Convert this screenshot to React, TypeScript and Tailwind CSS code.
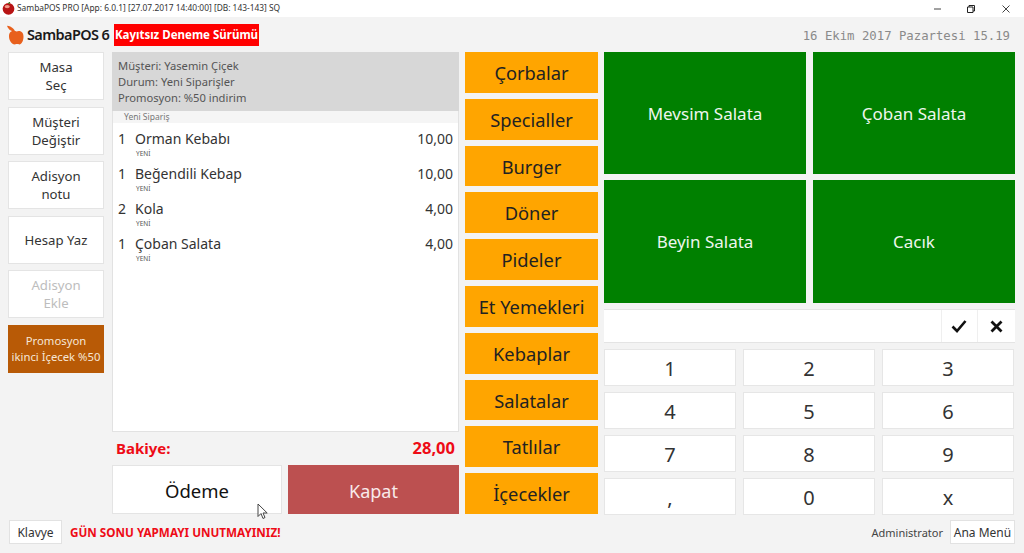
import React from "react";

const Apple = () => (
  <svg width="17" height="20" viewBox="0 0 17 20" className="shrink-0">
    <path d="M9.500 6.500C7 5.200 2 5.500 2 11.500 2 15.500 5 19.500 7.500 19.500c1 0 1.300-.4 2.500-.4s1.400.4 2.400.4c2.200 0 4.100-4 4.100-7.800 0-5.700-4.500-6.500-7-5.200z" fill="#e8601c" />
    <path d="M8 6.500C7 4 5 1.500 0 .8 1.200 4.200 3.500 6.500 8 6.500z" fill="#e8601c" />
  </svg>
);

const Side = ({ a, b, cls = "text-[#333]" }: { a: string; b?: string; cls?: string }) => (
  <div className={`flex h-[48px] flex-col items-center justify-center border border-[#e4e4e4] bg-white text-[13.200px] leading-[18px] ${cls}`}>
    <span>{a}</span>
    {b && <span>{b}</span>}
  </div>
);

const orders = [
  ["1", "Orman Kebabı", "10,00"],
  ["1", "Beğendili Kebap", "10,00"],
  ["2", "Kola", "4,00"],
  ["1", "Çoban Salata", "4,00"],
];
const cats = ["Çorbalar", "Specialler", "Burger", "Döner", "Pideler", "Et Yemekleri", "Kebaplar", "Salatalar", "Tatlılar", "İçecekler"];
const keys = ["1", "2", "3", "4", "5", "6", "7", "8", "9", ",", "0", "x"];

export default function App() {
  return (
    <div className="flex h-[553px] w-[1024px] flex-col overflow-hidden bg-[#f3f3f3] font-['Noto_Sans',sans-serif]">
      <div className="flex h-[17px] items-center bg-white pl-[2px] text-[8.400px] text-[#333]">
        <svg width="13" height="13" viewBox="0 0 20 20" className="mr-[2px]">
          <circle cx="10" cy="10.500" r="9" fill="#b81414" />
          <ellipse cx="8" cy="7" rx="4" ry="2.500" fill="#f29a8a" />
          <path d="M10 3l2-3" stroke="#3d7a1f" strokeWidth="2" />
        </svg>
        <span>SambaPOS PRO [App: 6.0.1] [27.07.2017 14:40:00] [DB: 143-143] SQ</span>
        <div className="ml-auto flex items-center">
          <svg width="8" height="8" viewBox="0 0 8 8" className="mr-[25px]"><path d="M0 4h7" stroke="#444" strokeWidth="1" /></svg>
          <svg width="8" height="8" viewBox="0 0 8 8" className="mr-[27px]"><path d="M.5 2h5.500v5.500H.5zM2 2V.5h5.500V6H6" fill="none" stroke="#222" strokeWidth="1" /></svg>
          <svg width="8" height="8" viewBox="0 0 8 8" className="mr-[14px]"><path d="M.5.5l7 7M7.500.5l-7 7" stroke="#444" strokeWidth="1" /></svg>
        </div>
      </div>

      <div className="flex h-[35px] items-center pl-[7px] pr-[14px] pt-[1px]">
        <Apple />
        <span className="ml-[3px] w-[86px] whitespace-nowrap text-[14.500px] font-semibold tracking-[-0.6px] text-[#1a1a1a]">SambaPOS 6</span>
        <span className="ml-[1px] flex h-[22px] w-[145px] items-center justify-center whitespace-nowrap bg-[#ff0000] text-[11.500px] font-bold text-white">Kayıtsız Deneme Sürümü</span>
        <span className="ml-auto pt-[2px] font-['DejaVu_Sans_Mono',monospace] text-[12.300px] text-[#8a8a8a]">16 Ekim 2017 Pazartesi 15.19</span>
      </div>

      <div className="flex h-[462px] pl-[8px]">
        <div className="flex w-[96px] flex-col gap-[6.500px]">
          <Side a="Masa" b="Seç" />
          <Side a="Müşteri" b="Değiştir" />
          <Side a="Adisyon" b="notu" />
          <Side a="Hesap Yaz" />
          <Side a="Adisyon" b="Ekle" cls="text-[#bdbdbd]" />
          <div className="flex h-[48px] flex-col items-center justify-center bg-[#b85a06] pt-[1px] text-[11.300px] leading-[16px] text-[#f6e6d6]">
            <span>Promosyon</span>
            <span>ikinci İçecek %50</span>
          </div>
        </div>

        <div className="ml-[8px] flex w-[347px] flex-col">
          <div className="h-[59px] bg-[#d7d7d7] px-[6px] pt-[6px] text-[11.200px] leading-[16px] text-[#555]">
            <div>Müşteri: Yasemin Çiçek</div>
            <div>Durum: Yeni Siparişler</div>
            <div>Promosyon: %50 indirim</div>
          </div>
          <div className="flex h-[321px] flex-col border border-t-0 border-[#e2e2e2] bg-white">
            <div className="mb-[3px] h-[12px] bg-[#f5f5f5] pl-[11px] text-[8.500px] leading-[12px] text-[#777]">Yeni Sipariş</div>
            {orders.map(([q, n, p]) => (
              <div key={n} className="flex h-[35px] flex-col px-[5px] text-[#333]">
                <div className="flex h-[24px] items-center text-[14px]">
                  <span className="w-[17px]">{q}</span>
                  <span>{n}</span>
                  <span className="ml-auto">{p}</span>
                </div>
                <span className="-mt-[0.5px] pl-[18px] text-[6.500px] leading-[7px] text-[#555]">YENİ</span>
              </div>
            ))}
          </div>
          <div className="flex h-[33px] items-center justify-between px-[4px] font-bold text-[#ee0b16]">
            <span className="text-[15px]">Bakiye:</span>
            <span className="text-[16.500px]">28,00</span>
          </div>
          <div className="flex h-[49px] gap-[6px]">
            <div className="flex w-[170px] items-center justify-center border border-[#e4e4e4] bg-white pt-[3px] text-[18.500px] text-[#111]">Ödeme</div>
            <div className="flex flex-1 items-center justify-center bg-[#bc5050] pt-[3px] text-[18px] text-[#f8eaea]">Kapat</div>
          </div>
        </div>

        <div className="ml-[6px] grid w-[133px] grid-rows-10 gap-[6px]">
          {cats.map((c) => (
            <div key={c} className="flex items-center justify-center bg-[#ffa500] pt-[0.5px] text-[18.300px] text-[#222]">{c}</div>
          ))}
        </div>

        <div className="ml-[6px] flex w-[411px] flex-col">
          <div className="grid h-[251px] grid-cols-2 grid-rows-[122px_123px] gap-x-[7px] gap-y-[6px]">
            {["Mevsim Salata", "Çoban Salata", "Beyin Salata", "Cacık"].map((g) => (
              <div key={g} className="flex items-center justify-center bg-[#008000] pt-[1px] text-[17px] text-[#eef6ee]">{g}</div>
            ))}
          </div>
          <div className="mt-[6px] flex h-[34px] border-y border-[#e4e4e4] bg-white">
            <div className="w-[338px] border-r border-[#efefef]" />
            <div className="flex w-[36px] items-center justify-center border-r border-[#efefef] pr-[2px]">
              <svg width="16" height="14" viewBox="0 0 16 14"><path d="M1.500 7.500l4.500 4.500L14.500 2" fill="none" stroke="#111" strokeWidth="2.600" /></svg>
            </div>
            <div className="flex flex-1 items-center justify-center">
              <svg width="13" height="13" viewBox="0 0 13 13"><path d="M1.500 1.500l10 10M11.500 1.500l-10 10" stroke="#111" strokeWidth="2.800" /></svg>
            </div>
          </div>
          <div className="mt-[6px] grid h-[165px] grid-cols-[132px_132px_132px] grid-rows-[37px_37px_37px_37px] gap-x-[7px] gap-y-[6px]">
            {keys.map((k) => (
              <div key={k} className="flex items-center justify-center border border-[#e6e6e6] bg-white pt-[2px] text-[20px] text-[#333]">{k}</div>
            ))}
          </div>
        </div>
      </div>

      <div className="flex h-[39px] items-start px-[9px] pt-[6px]">
        <div className="flex h-[24px] w-[53px] items-center justify-center border border-[#e2e2e2] bg-white pt-[2px] text-[12px] text-[#333]">Klavye</div>
        <span className="ml-[8px] flex h-[24px] items-center pt-[2px] text-[11.700px] font-bold text-[#ee0b16]">GÜN SONU YAPMAYI UNUTMAYINIZ!</span>
        <span className="ml-auto flex h-[24px] items-center pt-[2px] text-[11px] text-[#444]">Administrator</span>
        <div className="ml-[7px] flex h-[24px] w-[65px] items-center justify-center border border-[#e2e2e2] bg-white pt-[2px] text-[12px] text-[#333]">Ana Menü</div>
      </div>

      <svg width="14" height="17" viewBox="0 0 14 17" className="absolute left-[257px] top-[503px]">
        <path d="M1 1v12.500l3-3 2 5 2-1-2-4.500h4.200z" fill="#fff" stroke="#444" strokeWidth="1" />
      </svg>
    </div>
  );
}
